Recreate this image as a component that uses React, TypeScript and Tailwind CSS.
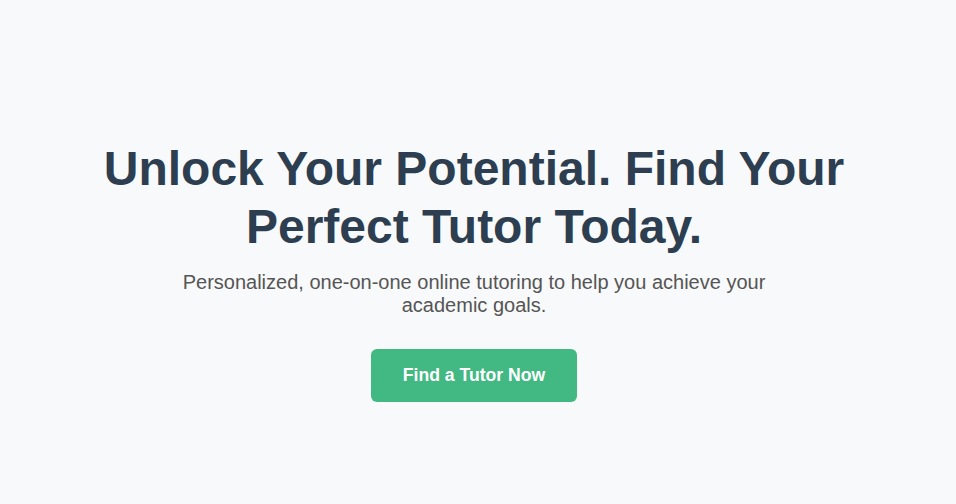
import React from "react";

const Hero = () => {
  return (
    <section className="flex flex-col items-center pl-4 pr-6 pt-[140px] text-center">
      <h1 className="max-w-[800px] text-[48px] font-bold leading-[1.2] text-[#2c3e50]">
        Unlock Your Potential. Find Your Perfect Tutor Today.
      </h1>
      <p className="mt-4 max-w-[600px] text-[20px] leading-[23px] text-[#555555]">
        Personalized, one-on-one online tutoring to help you achieve your academic goals.
      </p>
      <a
        href="#"
        className="mt-8 rounded-md bg-[#42b883] px-8 py-4 text-[17.6px] font-bold leading-[21px] text-white"
      >
        Find a Tutor Now
      </a>
    </section>
  );
};

export default function App() {
  return (
    <div
      className="min-h-[504px] w-full bg-[#f8f9fa]"
      style={{ fontFamily: '"Liberation Sans", Arial, sans-serif' }}
    >
      <Hero />
    </div>
  );
}
